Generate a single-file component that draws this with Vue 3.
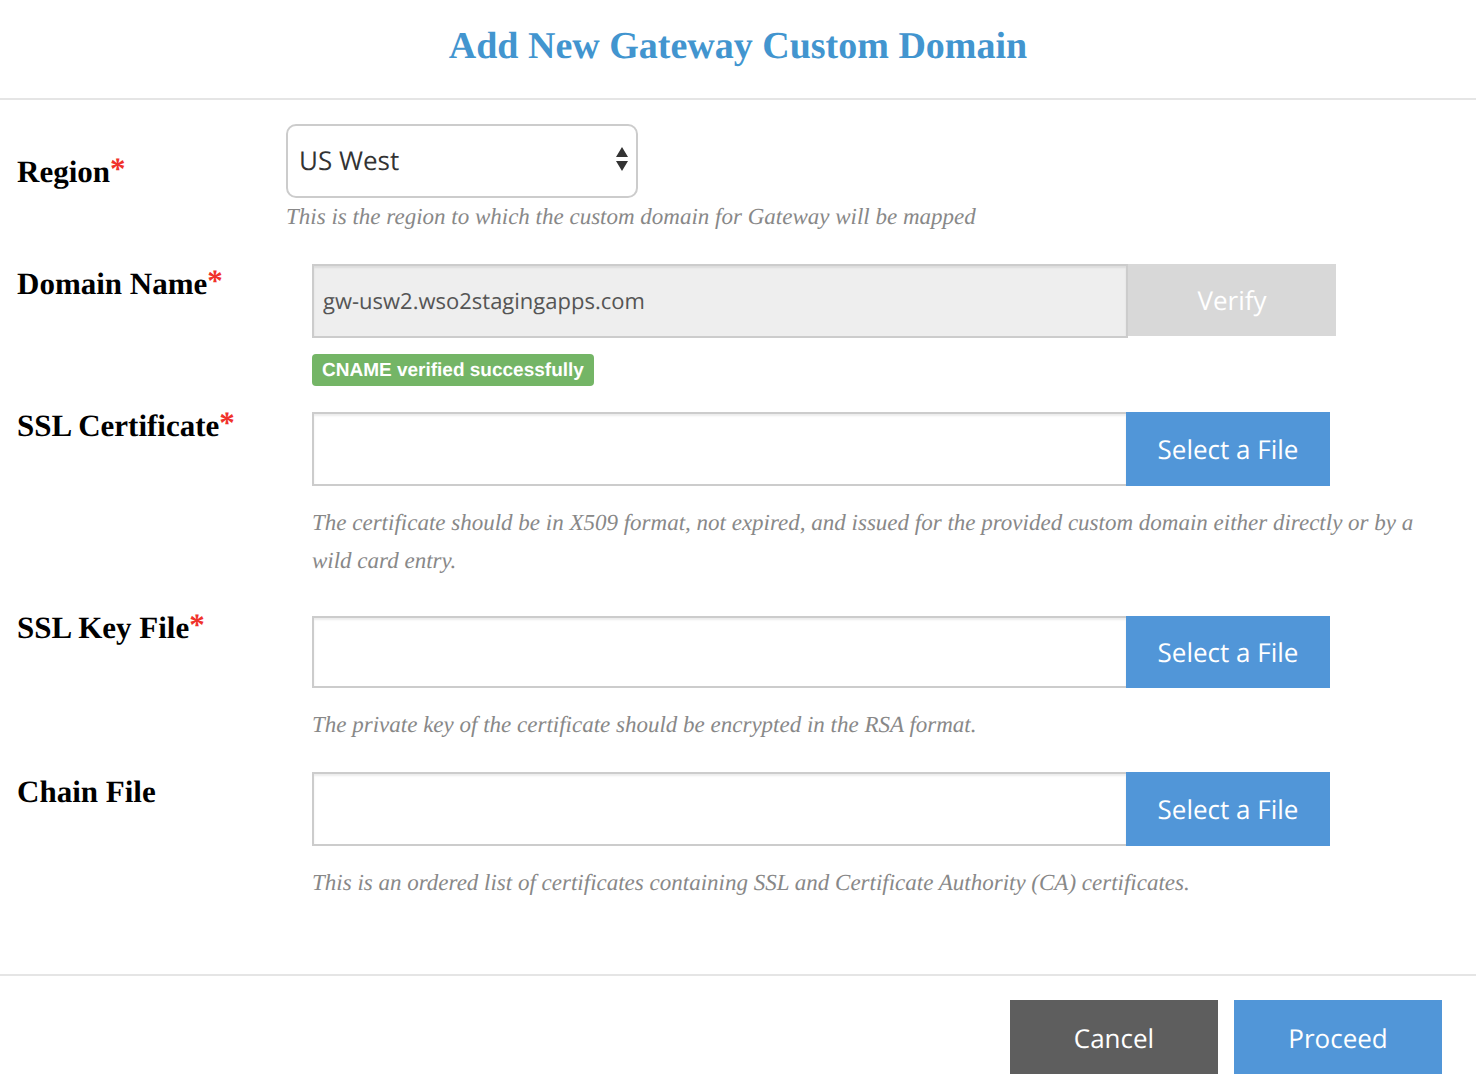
<script setup>
import { ref } from 'vue'

const region = ref('US West')
const domain = ref('gw-usw2.wso2stagingapps.com')

const files = ref([
  {
    id: 'ssl-certificate',
    label: 'SSL Certificate',
    required: true,
    value: '',
    hint: 'The certificate should be in X509 format, not expired, and issued for the provided custom domain either directly or by a wild card entry.',
  },
  {
    id: 'ssl-key',
    label: 'SSL Key File',
    required: true,
    value: '',
    hint: 'The private key of the certificate should be encrypted in the RSA format.',
  },
  {
    id: 'chain-file',
    label: 'Chain File',
    required: false,
    value: '',
    hint: 'This is an ordered list of certificates containing SSL and Certificate Authority (CA) certificates.',
  },
])
</script>

<template>
  <form class="dialog" @submit.prevent>
    <header class="dialog-header">
      <h1>Add New Gateway Custom Domain</h1>
    </header>

    <main class="dialog-body">
      <div class="row region">
        <label for="region">Region<span class="required">*</span></label>
        <div class="field">
          <div class="select-wrap">
            <select id="region" v-model="region">
              <option>US West</option>
            </select>
            <svg class="arrows" width="12" height="24" viewBox="0 0 12 24" aria-hidden="true">
              <path d="M6 0L12 10H0zM6 24L0 14H12z" fill="#333" />
            </svg>
          </div>
          <p class="hint">This is the region to which the custom domain for Gateway will be mapped</p>
        </div>
      </div>

      <div class="row domain">
        <label for="domain">Domain Name<span class="required">*</span></label>
        <div class="field">
          <div class="group">
            <input id="domain" v-model="domain" type="text" disabled />
            <button type="button" class="btn verify" disabled>Verify</button>
          </div>
          <span class="badge">CNAME verified successfully</span>
        </div>
      </div>

      <div v-for="file in files" :key="file.id" class="row" :class="file.id">
        <label :for="file.id">{{ file.label }}<span v-if="file.required" class="required">*</span></label>
        <div class="field">
          <div class="group">
            <input :id="file.id" v-model="file.value" type="text" />
            <button type="button" class="btn select-file">Select a File</button>
          </div>
          <p class="hint">{{ file.hint }}</p>
        </div>
      </div>
    </main>

    <footer class="dialog-footer">
      <button type="button" class="btn cancel">Cancel</button>
      <button type="submit" class="btn">Proceed</button>
    </footer>
  </form>
</template>

<style>
body {
  margin: 0;
  background: #fff;
}
</style>

<style scoped>
.dialog {
  font-family: "Liberation Serif", "Times New Roman", serif;
  color: #000;
}

.dialog * {
  box-sizing: border-box;
  text-rendering: geometricPrecision;
}

.dialog-header {
  padding: 22px 16px 28px;
  border-bottom: 2px solid #e5e5e5;
}

h1 {
  margin: 0;
  font-size: 38px;
  line-height: 48px;
  text-align: center;
  color: #4295cf;
}

.dialog-body {
  padding: 24px 34px 72px 17px;
}

.row {
  display: flex;
  align-items: flex-start;
  margin-bottom: 28px;
}

.row:last-child {
  margin-bottom: 0;
}

.row > label {
  flex: 0 0 269px;
  font-size: 31px;
  font-weight: bold;
  line-height: 40px;
}

.required {
  line-height: 1;
  vertical-align: 3px;
  color: #f0322b;
}

.field {
  flex: 1;
  min-width: 0;
  padding-left: 26px;
}

.region > label {
  padding-top: 28px;
}

.region .field {
  padding-left: 0;
}

.domain {
  margin-bottom: 26px;
}

.ssl-certificate {
  margin-bottom: 36px;
}

.ssl-certificate > label {
  margin-top: -6px;
}

.ssl-key > label {
  margin-top: -8px;
}

.select-wrap {
  position: relative;
  width: 352px;
}

select {
  display: block;
  width: 100%;
  height: 74px;
  padding: 0 11px 2px;
  border: 2px solid #ccc;
  border-radius: 10px;
  appearance: none;
  background: #fff;
  color: #333;
  font: 26px "Open Sans", sans-serif;
}

.arrows {
  position: absolute;
  top: 23px;
  right: 10px;
  pointer-events: none;
}

.group {
  display: flex;
  align-items: flex-start;
}

.group input {
  flex: 0 1 816px;
  min-width: 0;
  height: 74px;
  padding: 0 9px;
  border: 2px solid #ccc;
  border-radius: 0;
  background: #fff;
  box-shadow: inset 0 2px 2px rgba(0, 0, 0, 0.075);
  color: #555;
  font: 22px "Open Sans", sans-serif;
}

.group input:disabled {
  background: #eee;
}

.ssl-key .group input,
.ssl-key .select-file {
  height: 72px;
}

.btn {
  flex: none;
  width: 208px;
  height: 74px;
  padding: 0;
  border: 0;
  background: #5196d8;
  color: #fff;
  font: 26px "Open Sans", sans-serif;
}

.verify {
  height: 72px;
  background: #d8d8d8;
}

.select-file {
  width: 204px;
  margin-left: -2px;
}

.cancel {
  background: #5e5e5e;
}

.dialog-footer .btn {
  padding-top: 2px;
}

.hint {
  margin: 18px 0 0;
  font-size: 23px;
  font-style: italic;
  line-height: 38px;
  color: #888;
}

.region .hint {
  margin-top: 0;
}

.badge {
  display: block;
  width: fit-content;
  margin-top: 16px;
  padding: 2px 10px 0;
  border-radius: 4px;
  background: #74b566;
  color: #fff;
  font: bold 19px/30px "Liberation Sans", Arial, sans-serif;
}

.dialog-footer {
  display: flex;
  justify-content: flex-end;
  gap: 16px;
  padding: 24px 34px 16px;
  border-top: 2px solid #e5e5e5;
}
</style>
